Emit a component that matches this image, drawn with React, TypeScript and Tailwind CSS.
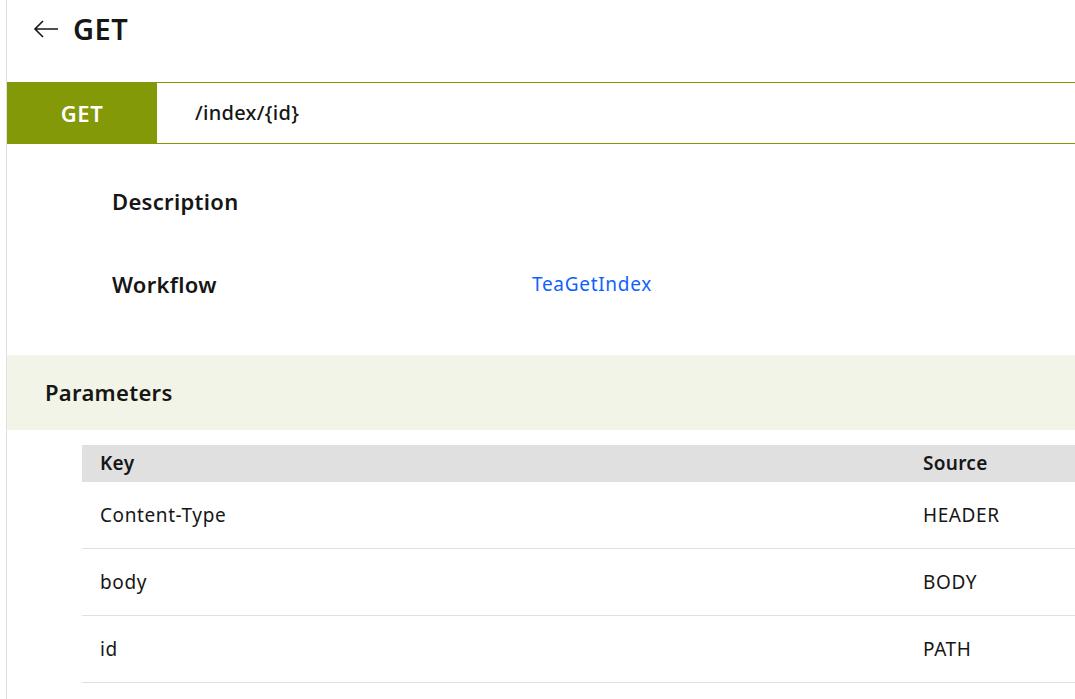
import React from 'react';

const params = [
  { key: 'Content-Type', source: 'HEADER' },
  { key: 'body', source: 'BODY' },
  { key: 'id', source: 'PATH' },
];

const font = { fontFamily: '"Noto Sans", "Open Sans", sans-serif' };

export default function App() {
  return (
    <div className="min-h-screen bg-white text-[#161616]" style={font}>
      <div className="ml-[6px] min-h-screen border-l border-[#e0e0e0]">
        {/* header */}
        <div className="flex h-[57px] items-center gap-[14px] pl-[26px]">
          <svg width="26" height="20" viewBox="0 0 26 20" fill="none" stroke="#161616" strokeWidth="1.6">
            <path d="M25 10H2M10 2L2 10l8 8" />
          </svg>
          <h1 className="text-[29px] font-semibold leading-none tracking-[0.5px]">GET</h1>
        </div>

        {/* endpoint bar */}
        <div className="mt-[25px] flex h-[62px]">
          <div className="flex w-[150px] items-center justify-center bg-[#839907] text-[22px] font-semibold tracking-[0.6px] text-white">
            GET
          </div>
          <div className="flex flex-1 items-center border-y border-[#839907] pl-[38px] text-[20px] font-medium tracking-[0.3px]">
            /index/{'{id}'}
          </div>
        </div>

        {/* details */}
        <div className="pb-[53px] pl-[105px] pt-[40px]">
          <div className="flex h-[35px] items-center">
            <div className="w-[420px] text-[22px] font-semibold tracking-[0.3px]">Description</div>
            <div />
          </div>
          <div className="mt-[48px] flex h-[35px] items-center">
            <div className="w-[420px] text-[22px] font-semibold tracking-[0.3px]">Workflow</div>
            <a className="text-[19px] tracking-[0.7px] text-[#0f62fe]">TeaGetIndex</a>
          </div>
        </div>

        {/* parameters */}
        <div className="flex h-[75px] items-center bg-[#f2f4e7] pl-[38px] text-[22px] font-semibold tracking-[0.3px]">
          Parameters
        </div>

        <div className="ml-[75px] mt-[15px]">
          <div className="flex h-[37px] items-center bg-[#e0e0e0] text-[19px] font-semibold tracking-[0.3px]">
            <div className="flex-1 pl-[18px]">Key</div>
            <div className="w-[152px]">Source</div>
          </div>
          {params.map((p) => (
            <div key={p.key} className="flex h-[67px] items-center border-b border-[#e0e0e0] text-[19px] tracking-[0.6px]">
              <div className="flex-1 pl-[18px]">{p.key}</div>
              <div className="w-[152px]">{p.source}</div>
            </div>
          ))}
        </div>
      </div>
    </div>
  );
}
